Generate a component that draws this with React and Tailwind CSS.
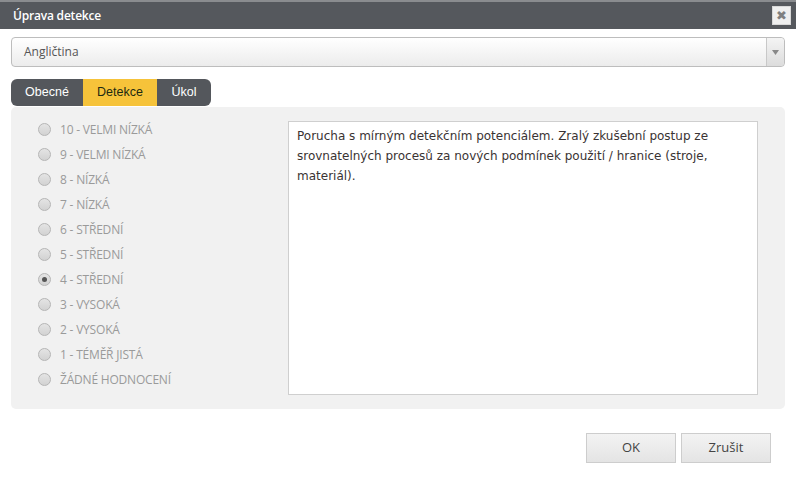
import React, { useState } from "react";

const levels = [
    "10 - VELMI NÍZKÁ",
    "9 - VELMI NÍZKÁ",
    "8 - NÍZKÁ",
    "7 - NÍZKÁ",
    "6 - STŘEDNÍ",
    "5 - STŘEDNÍ",
    "4 - STŘEDNÍ",
    "3 - VYSOKÁ",
    "2 - VYSOKÁ",
    "1 - TÉMĚŘ JISTÁ",
    "ŽÁDNÉ HODNOCENÍ",
];

function Radio({ checked }) {
    return (
        <span className="w-[13px] h-[13px] rounded-full border border-[#b5b5b5] bg-gradient-to-b from-[#e4e4e4] to-[#d2d2d2] flex items-center justify-center shrink-0">
            {checked && <span className="w-[5px] h-[5px] rounded-full bg-[#555]" />}
        </span>
    );
}

export default function App() {
    const [tab, setTab] = useState("Detekce");
    const [level, setLevel] = useState("4 - STŘEDNÍ");

    return (
        <div className="w-[796px] h-[478px] bg-white relative overflow-hidden" style={{ fontFamily: '"Open Sans", sans-serif' }}>
            {/* title bar */}
            <div className="h-[29px] bg-[#55585d] border-t-2 border-[#8a8c8f] flex items-center justify-between pl-[13px] pr-[5px]">
                <span className="text-white text-[12px] font-semibold tracking-[-0.2px]">Úprava detekce</span>
                <button className="w-[19px] h-[19px] bg-[#efefef] border border-[#d8d8d8] flex items-center justify-center text-[#808080] text-[13px] font-bold leading-none" style={{ fontFamily: '"DejaVu Sans", sans-serif' }}>
                    ✖
                </button>
            </div>

            {/* language select */}
            <div className="mx-[11px] mt-[8px] h-[30px] rounded-[4px] border border-[#bdbdbd] bg-gradient-to-b from-white to-[#ececec] flex items-center">
                <span className="flex-1 pl-[12px] text-[12px] text-[#555]">Angličtina</span>
                <span className="w-[18px] h-full border-l border-[#c8c8c8] bg-gradient-to-b from-[#f4f4f4] to-[#dcdcdc] rounded-r-[4px] flex items-center justify-center">
                    <svg width="7" height="5" viewBox="0 0 7 5">
                        <path d="M0 0 L7 0 L3.5 5 Z" fill="#888" />
                    </svg>
                </span>
            </div>

            {/* tabs */}
            <div className="mx-[11px] mt-[12px] flex" style={{ fontFamily: '"Liberation Sans", Arial, sans-serif' }}>
                <div className="flex rounded-[6px] overflow-hidden text-[12.5px] h-[27px]">
                    {["Obecné", "Detekce", "Úkol"].map((t) => (
                        <button
                            key={t}
                            onClick={() => setTab(t)}
                            className={
                                t === "Detekce"
                                    ? "bg-[#f6c33a] text-[#1d2a12] w-[74px]"
                                    : t === "Obecné"
                                    ? "bg-[#54575c] text-white w-[72px]"
                                    : "bg-[#54575c] text-white w-[54px]"
                            }
                        >
                            {t}
                        </button>
                    ))}
                </div>
            </div>

            {/* panel */}
            <div className="mx-[11px] mt-[1px] h-[302px] bg-[#f1f1f1] rounded-[5px] flex pt-[10px] pl-[27px] pr-[27px]">
                <div className="w-[250px] flex flex-col">
                    {levels.map((l) => (
                        <label key={l} onClick={() => setLevel(l)} className="h-[25px] flex items-center gap-[9px] cursor-pointer">
                            <Radio checked={level === l} />
                            <span className="text-[12px] text-[#9a9a9a] tracking-[-0.2px]">{l}</span>
                        </label>
                    ))}
                </div>
                <div className="flex-1 mt-[4px] h-[274px] bg-white border border-[#cfcfcf] px-[8px] py-[4px] text-[12px] leading-[20px] text-[#3a3333]" style={{ fontFamily: '"DejaVu Sans", Verdana, sans-serif' }}>
                    Porucha s mírným detekčním potenciálem. Zralý zkušební postup ze srovnatelných procesů za nových podmínek použití / hranice (stroje, materiál).
                </div>
            </div>

            {/* footer buttons */}
            <div className="flex justify-end gap-[5px] mt-[24px] pr-[25px]">
                {["OK", "Zrušit"].map((b) => (
                    <button key={b} className="w-[90px] h-[30px] border border-[#cdcdcd] bg-gradient-to-b from-[#f3f3f3] to-[#e4e4e4] text-[13px] text-[#444]">
                        {b}
                    </button>
                ))}
            </div>
        </div>
    );
}
